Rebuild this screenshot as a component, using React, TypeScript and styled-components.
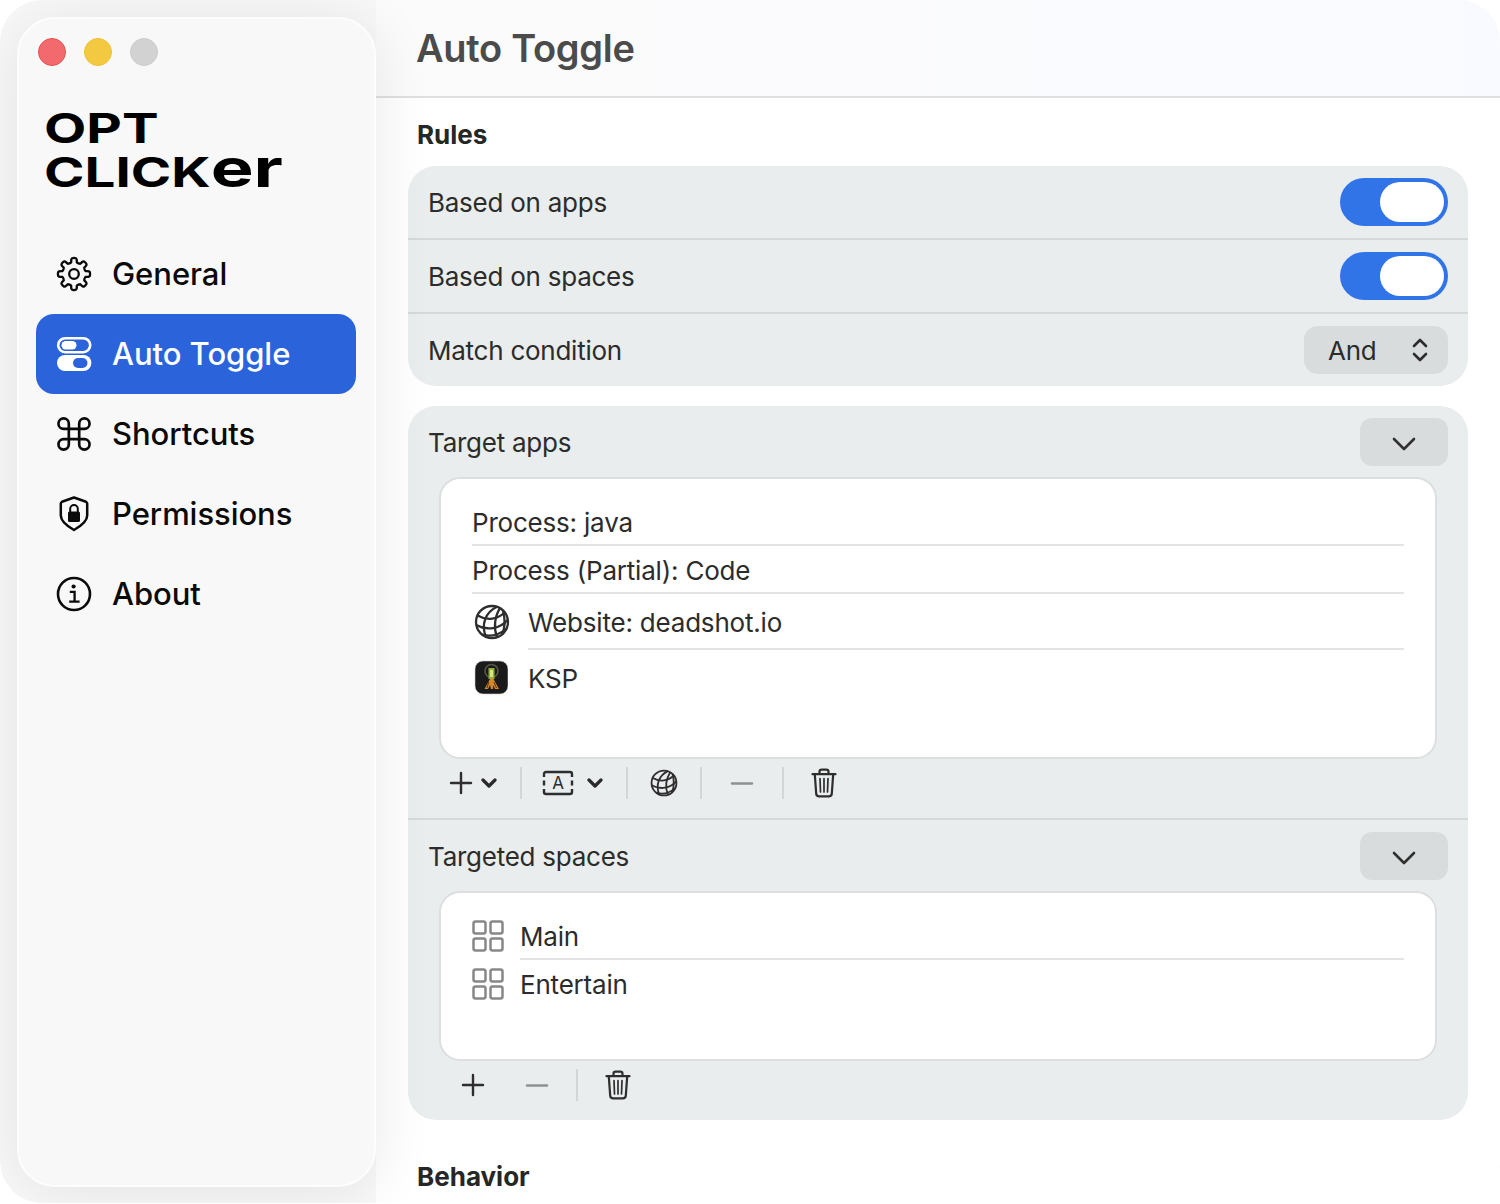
import React from "react";
import styled, { createGlobalStyle } from "styled-components";

const Global = createGlobalStyle`
  html, body { margin: 0; padding: 0; background: #fff; overflow: hidden; }
  #root { width: 1500px; height: 1204px; }
  * { box-sizing: border-box; }
`;

const Window = styled.div`
  width: 1500px; height: 1203px; display: flex; overflow: hidden;
  border-radius: 42px; background: #f8f8f8;
  font-family: Inter, "Noto Sans", sans-serif;
`;
const Sidebar = styled.aside`
  position: relative; z-index: 1; flex: 0 0 359px; height: 1170px; margin: 17px 0 0 17px;
  padding: 19px 18px 0 17px; display: flex; flex-direction: column;
  background: #f8f8f8; border: 2px solid #fdfdfd; border-radius: 38px;
  box-shadow: 0 4px 60px rgba(0,0,0,.09);
`;
const Lights = styled.div`display: flex; gap: 18px; padding-left: 2px;`;
const Light = styled.span<{ $bg: string; $bd: string }>`
  width: 28px; height: 28px; border-radius: 50%; background: ${p => p.$bg}; border: 1px solid ${p => p.$bd};
`;
const Logo = styled.div`
  margin: 42px 0 0 8px; height: 93px; color: #000; font-weight: 700;
`;
const LogoLine = styled.div<{ $sx: number; $h: number }>`
  height: ${p => p.$h}px; line-height: ${p => p.$h}px; font-size: 41px; white-space: nowrap;
  transform-origin: left center; transform: scaleX(${p => p.$sx});
`;
const LogoLow = styled.span`font-size: 54px;`;
const Nav = styled.nav`display: flex; flex-direction: column; margin-top: 33px;`;
const NavItem = styled.div<{ $active?: boolean }>`
  height: 80px; display: flex; align-items: center; padding-left: 19px; gap: 19px; border-radius: 18px;
  font-size: 31px; font-weight: 500; letter-spacing: -0.05px;
  color: ${p => (p.$active ? "#fff" : "#0a0a0a")};
  background: ${p => (p.$active ? "#2b64da" : "transparent")};
`;
const NavText = styled.span`margin-top: -2px;`;
const NavIcon = styled.svg`width: 38px; height: 38px; flex: none; fill: none; stroke: currentColor;`;

const Main = styled.main`flex: 1; min-width: 0; background: #fff; display: flex; flex-direction: column;`;
const Header = styled.header`
  height: 98px; flex: none; padding: 0 0 0 40px; display: flex; align-items: center;
  background: linear-gradient(90deg, #fbfbfb, #f9faff); border-bottom: 2px solid #e0e0e0;
`;
const Title = styled.h1`margin: 0; font-size: 38px; font-weight: 600; letter-spacing: -0.3px; color: #4b4b4b;`;
const Content = styled.div`padding: 0 32px; display: flex; flex-direction: column;`;
const SectionLabel = styled.h2<{ $top: number; $bottom: number }>`
  margin: ${p => p.$top}px 0 ${p => p.$bottom}px 9px; height: 32px; line-height: 32px;
  font-size: 26px; font-weight: 700; color: #262626;
`;
const Card = styled.section<{ $mb?: number }>`
  background: #e9eded; border-radius: 28px; margin-bottom: ${p => p.$mb ?? 0}px; overflow: hidden;
`;
const Row = styled.div<{ $last?: boolean }>`
  height: ${p => (p.$last ? 72 : 74)}px; padding: 0 20px; display: flex; align-items: center; justify-content: space-between;
  border-bottom: ${p => (p.$last ? "none" : "2px solid #d6d9d9")};
`;
const Label = styled.span`font-size: 26px; color: #2c2c2c; letter-spacing: -0.25px;`;
const Toggle = styled.div`
  width: 108px; height: 48px; border-radius: 24px; background: #3174e8; padding: 4px; display: flex; justify-content: flex-end;
`;
const Knob = styled.div`width: 64px; height: 40px; border-radius: 20px; background: #fff;`;
const Select = styled.div`
  width: 144px; height: 48px; border-radius: 14px; background: #d9dcdd; padding: 0 19px 0 24px;
  display: flex; align-items: center; justify-content: space-between;
`;
const SelectIcon = styled.svg`width: 18px; height: 28px; fill: none; stroke: #2c2c2c; stroke-width: 2.6; stroke-linecap: round; stroke-linejoin: round;`;
const Section = styled.div<{ $divider?: boolean }>`
  padding: 12px 20px 11px; border-bottom: ${p => (p.$divider ? "2px solid #d6d9d9" : "none")};
`;
const SectionHead = styled.div`height: 48px; margin-bottom: 11px; display: flex; align-items: center; justify-content: space-between;`;
const Disclosure = styled.div`
  width: 88px; height: 48px; border-radius: 12px; background: #d9dcdd; display: flex; align-items: center; justify-content: center;
`;
const ChevronWide = styled.svg`width: 26px; height: 16px; margin-top: 3px; fill: none; stroke: #303030; stroke-width: 2.6; stroke-linecap: round; stroke-linejoin: round;`;
const List = styled.div<{ $h: number }>`
  margin: 0 11px; height: ${p => p.$h}px; padding: 19px 31px 0; background: #fff; border: 2px solid #dcdfdf; border-radius: 21px;
`;
const ListRow = styled.div<{ $h: number; $gap?: number }>`
  height: ${p => p.$h}px; display: flex; align-items: center; gap: ${p => p.$gap ?? 0}px;
`;
const RowBody = styled.div<{ $line?: boolean }>`
  flex: 1; align-self: stretch; display: flex; align-items: center; font-size: 26px; color: #2c2c2c; letter-spacing: -0.2px;
  padding-top: 3px; border-bottom: 2px solid ${p => (p.$line ? "#e3e3e3" : "transparent")};
`;
const GlobeIcon = styled.svg<{ $s: number; $ml?: number }>`
  width: ${p => p.$s}px; height: ${p => p.$s}px; margin-left: ${p => p.$ml ?? 0}px; flex: none; fill: none; stroke: #2e2e2e; stroke-width: 2.3;
`;
const AppIcon = styled.svg`width: 36px; height: 36px; flex: none;`;
const SpacesIcon = styled.svg`width: 32px; height: 32px; flex: none; fill: none; stroke: #888; stroke-width: 2.5;`;
const Toolbar = styled.div`height: 48px; margin: 0 12px; display: flex; align-items: center;`;
const ToolGroup = styled.div<{ $w: number; $pr?: number; $gap?: number }>`
  width: ${p => p.$w}px; padding-right: ${p => p.$pr ?? 0}px; display: flex; align-items: center; justify-content: center; gap: ${p => p.$gap ?? 0}px; flex: none;
`;
const ToolSep = styled.div`width: 2px; height: 32px; background: #d3d6d6; flex: none;`;
const PlusMinus = styled.svg<{ $muted?: boolean }>`
  width: 24px; height: 24px; flex: none; fill: none; stroke: ${p => (p.$muted ? "#8f9191" : "#2e2e2e")}; stroke-width: 2.4; stroke-linecap: round;
`;
const ChevronSmall = styled.svg`width: 16px; height: 12px; flex: none; fill: none; stroke: #2a2a2a; stroke-width: 3.2; stroke-linecap: round; stroke-linejoin: round;`;
const TextBoxIcon = styled.svg`width: 32px; height: 26px; flex: none; fill: none; stroke: #2e2e2e; stroke-width: 2.4;`;
const TextBoxLetter = styled.text`font-family: Inter, sans-serif; font-size: 17px; fill: #2e2e2e; stroke: none;`;
const TrashIcon = styled.svg`width: 26px; height: 30px; flex: none; fill: none; stroke: #2e2e2e; stroke-width: 2.2; stroke-linecap: round; stroke-linejoin: round;`;

const gearPath = (() => {
  const teeth = 8, cx = 19, cy = 19, R = 16, r = 12;
  const pts: string[] = [];
  for (let i = 0; i < teeth; i++) {
    const a = (i * 2 * Math.PI) / teeth - Math.PI / 2;
    const s = (2 * Math.PI) / teeth;
    const at = (rad: number, an: number) => `${(cx + rad * Math.cos(an)).toFixed(2)} ${(cy + rad * Math.sin(an)).toFixed(2)}`;
    const start = pts.length === 0 ? "M" : "L";
    pts.push(`${start}${at(r, a - s * 0.3)} Q${at(R + 0.4, a - s * 0.24)} ${at(R, a - s * 0.1)} Q${at(R + 0.3, a)} ${at(R, a + s * 0.1)} Q${at(R + 0.4, a + s * 0.24)} ${at(r, a + s * 0.3)} Q${at(r - 0.9, a + s * 0.5)} ${at(r, a + s * 0.7)}`);
  }
  return pts.join(" ") + " Z";
})();

const Gear = () => (
  <NavIcon viewBox="0 0 38 38" strokeWidth={2.3} strokeLinejoin="round">
    <path d={gearPath} />
    <circle cx="19" cy="19" r="4.8" />
  </NavIcon>
);
const Toggles = () => (
  <NavIcon viewBox="0 0 38 38">
    <rect x="3.2" y="3.2" width="32" height="14" rx="7" strokeWidth="2.6" />
    <rect x="6.5" y="6" width="15" height="8.4" rx="4.2" fill="currentColor" stroke="none" />
    <rect x="2" y="20" width="34.4" height="16" rx="8" fill="currentColor" stroke="none" />
    <rect x="18" y="23" width="14.5" height="10" rx="5" fill="#2b64da" stroke="none" />
  </NavIcon>
);
const Cmd = () => (
  <NavIcon viewBox="1 1 22 22" strokeWidth={1.55}>
    <path d="M15 6v12a3 3 0 1 0 3-3H6a3 3 0 1 0 3 3V6a3 3 0 1 0-3 3h12a3 3 0 1 0-3-3" />
  </NavIcon>
);
const Shield = () => (
  <NavIcon viewBox="0 0 38 38" strokeWidth={2.5} strokeLinejoin="round">
    <path d="M19 2.5 L31 6.8 Q32.2 7.3 32.2 8.6 V20.5 C32.2 26.5 26 31 19 35 C12 31 5.8 26.5 5.8 20.5 V8.6 Q5.8 7.3 7 6.8 Z" />
    <rect x="13" y="16.5" width="12" height="10.5" rx="1.6" fill="currentColor" stroke="none" />
    <path d="M15.2 17 v-3.2 a3.8 3.8 0 0 1 7.6 0 v3.2" strokeWidth="2" />
  </NavIcon>
);
const Info = () => (
  <NavIcon viewBox="0 0 38 38" strokeWidth={2.6}>
    <circle cx="19" cy="19" r="16" />
    <circle cx="18.6" cy="11.5" r="2.1" fill="currentColor" stroke="none" />
    <path d="M14.8 16.8 H19.6 V26.2 M14.2 26.6 H24.6" strokeWidth="2.3" />
  </NavIcon>
);
const Globe = ({ s, ml }: { s: number; ml?: number }) => (
  <GlobeIcon $s={s} $ml={ml} viewBox="0 0 36 36">
    <circle cx="18" cy="18" r="16" />
    <path d="M23 2.8 C12 8 6.5 20 12 33" />
    <path d="M26 4.2 C20.5 13 19.5 24 23 33" />
    <path d="M29 6.5 C31 14 31 24 28 30.6" />
    <path d="M3.5 11.5 C13 17 24 15.5 31 8" />
    <path d="M2.2 21 C13 27 26 25 34 15.5" />
    <path d="M8 30.5 C16 33 25 31 32.5 24.5" />
  </GlobeIcon>
);
const Ksp = () => (
  <AppIcon viewBox="0 0 36 36">
    <rect x="3" y="1" width="33" height="33" rx="8" fill="#1a1a1a" />
    <rect x="3" y="1" width="33" height="33" rx="8" fill="none" stroke="#cfcfcf" strokeWidth=".6" />
    <circle cx="19.5" cy="11" r="6.5" fill="none" stroke="#5b5348" strokeWidth="1.5" />
    <rect x="16.5" y="8" width="6" height="11" fill="#8fae3a" />
    <rect x="18" y="10" width="3" height="7" fill="#d6e57e" />
    <path d="M18 19 L12.5 29 H16 L18 25 L19 29 H21 L21.5 25 L23 29 H27 L21.5 19 Z" fill="#d5872b" />
    <path d="M16.8 22 L15 28 M22 22 L24.5 28" stroke="#5a3210" strokeWidth="1" fill="none" />
  </AppIcon>
);
const Spaces = () => (
  <SpacesIcon viewBox="0 0 32 32">
    <rect x="1.5" y="1.5" width="12" height="12" rx="2" />
    <rect x="18.5" y="1.5" width="12" height="12" rx="2" />
    <rect x="1.5" y="18.5" width="12" height="12" rx="2" />
    <rect x="18.5" y="18.5" width="12" height="12" rx="2" />
  </SpacesIcon>
);
const Plus = () => (
  <PlusMinus viewBox="0 0 24 24"><path d="M12 2 V22 M2 12 H22" /></PlusMinus>
);
const Minus = () => (
  <PlusMinus $muted viewBox="0 0 24 24"><path d="M2 12.5 H22" /></PlusMinus>
);
const SmallChevron = () => (
  <ChevronSmall viewBox="0 0 16 12"><path d="M2 3 L8 9 L14 3" /></ChevronSmall>
);
const WideChevron = () => (
  <ChevronWide viewBox="0 0 26 16"><path d="M3 3 L13 13 L23 3" /></ChevronWide>
);
const TextBox = () => (
  <TextBoxIcon viewBox="0 0 32 26">
    <path d="M2 7 V4 Q2 2 4 2 H28 Q30 2 30 4 V7 M2 10.5 V15.5 M30 10.5 V15.5 M2 19 V22 Q2 24 4 24 H28 Q30 24 30 22 V19" />
    <TextBoxLetter x="16" y="19" textAnchor="middle">A</TextBoxLetter>
  </TextBoxIcon>
);
const Trash = () => (
  <TrashIcon viewBox="0 0 26 30">
    <path d="M1.5 6.2 H24.5" />
    <path d="M8.5 6 V3.8 Q8.5 1.6 10.7 1.6 H15.3 Q17.5 1.6 17.5 3.8 V6" />
    <path d="M3.8 6.4 L5.2 25.6 Q5.4 28.4 8.2 28.4 H17.8 Q20.6 28.4 20.8 25.6 L22.2 6.4" />
    <path d="M9 10.5 L9.5 24 M13 10.5 V24 M17 10.5 L16.5 24" strokeWidth="1.7" />
  </TrashIcon>
);

const navItems: { label: string; Icon: React.FC; active?: boolean }[] = [
  { label: "General", Icon: Gear },
  { label: "Auto Toggle", Icon: Toggles, active: true },
  { label: "Shortcuts", Icon: Cmd },
  { label: "Permissions", Icon: Shield },
  { label: "About", Icon: Info },
];

export default function App() {
  return (
    <>
      <Global />
      <Window>
        <Sidebar>
          <Lights>
            <Light $bg="#f26a6d" $bd="#e9504f" />
            <Light $bg="#f4c942" $bd="#eec132" />
            <Light $bg="#d2d2d2" $bd="#cbcbcb" />
          </Lights>
          <Logo>
            <LogoLine $sx={1.34} $h={40}>OPT</LogoLine>
            <LogoLine $sx={1.335} $h={39}>CLICK<LogoLow>er</LogoLow></LogoLine>
          </Logo>
          <Nav>
            {navItems.map(({ label, Icon, active }) => (
              <NavItem key={label} $active={active}><Icon /><NavText>{label}</NavText></NavItem>
            ))}
          </Nav>
        </Sidebar>
        <Main>
          <Header><Title>Auto Toggle</Title></Header>
          <Content>
            <SectionLabel $top={21} $bottom={15}>Rules</SectionLabel>
            <Card $mb={20}>
              <Row><Label>Based on apps</Label><Toggle><Knob /></Toggle></Row>
              <Row><Label>Based on spaces</Label><Toggle><Knob /></Toggle></Row>
              <Row $last>
                <Label>Match condition</Label>
                <Select>
                  <Label>And</Label>
                  <SelectIcon viewBox="0 0 18 28">
                    <path d="M3 10 L9 4 L15 10 M3 18 L9 24 L15 18" />
                  </SelectIcon>
                </Select>
              </Row>
            </Card>
            <Card>
              <Section $divider>
                <SectionHead><Label>Target apps</Label><Disclosure><WideChevron /></Disclosure></SectionHead>
                <List $h={282}>
                  <ListRow $h={48}><RowBody $line>Process: java</RowBody></ListRow>
                  <ListRow $h={48}><RowBody $line>Process (Partial): Code</RowBody></ListRow>
                  <ListRow $h={56} $gap={18}><Globe s={36} ml={2} /><RowBody $line>Website: deadshot.io</RowBody></ListRow>
                  <ListRow $h={56} $gap={20}><Ksp /><RowBody>KSP</RowBody></ListRow>
                </List>
                <Toolbar>
                  <ToolGroup $w={80} $pr={14} $gap={8}><Plus /><SmallChevron /></ToolGroup>
                  <ToolSep />
                  <ToolGroup $w={104} $pr={3} $gap={13}><TextBox /><SmallChevron /></ToolGroup>
                  <ToolSep />
                  <ToolGroup $w={72}><Globe s={28} /></ToolGroup>
                  <ToolSep />
                  <ToolGroup $w={80}><Minus /></ToolGroup>
                  <ToolSep />
                  <ToolGroup $w={80}><Trash /></ToolGroup>
                </Toolbar>
              </Section>
              <Section>
                <SectionHead><Label>Targeted spaces</Label><Disclosure><WideChevron /></Disclosure></SectionHead>
                <List $h={170}>
                  <ListRow $h={48} $gap={16}><Spaces /><RowBody $line>Main</RowBody></ListRow>
                  <ListRow $h={48} $gap={16}><Spaces /><RowBody>Entertain</RowBody></ListRow>
                </List>
                <Toolbar>
                  <ToolGroup $w={65}><Plus /></ToolGroup>
                  <ToolGroup $w={71} $pr={8}><Minus /></ToolGroup>
                  <ToolSep />
                  <ToolGroup $w={80}><Trash /></ToolGroup>
                </Toolbar>
              </Section>
            </Card>
            <SectionLabel $top={41} $bottom={0}>Behavior</SectionLabel>
          </Content>
        </Main>
      </Window>
    </>
  );
}
